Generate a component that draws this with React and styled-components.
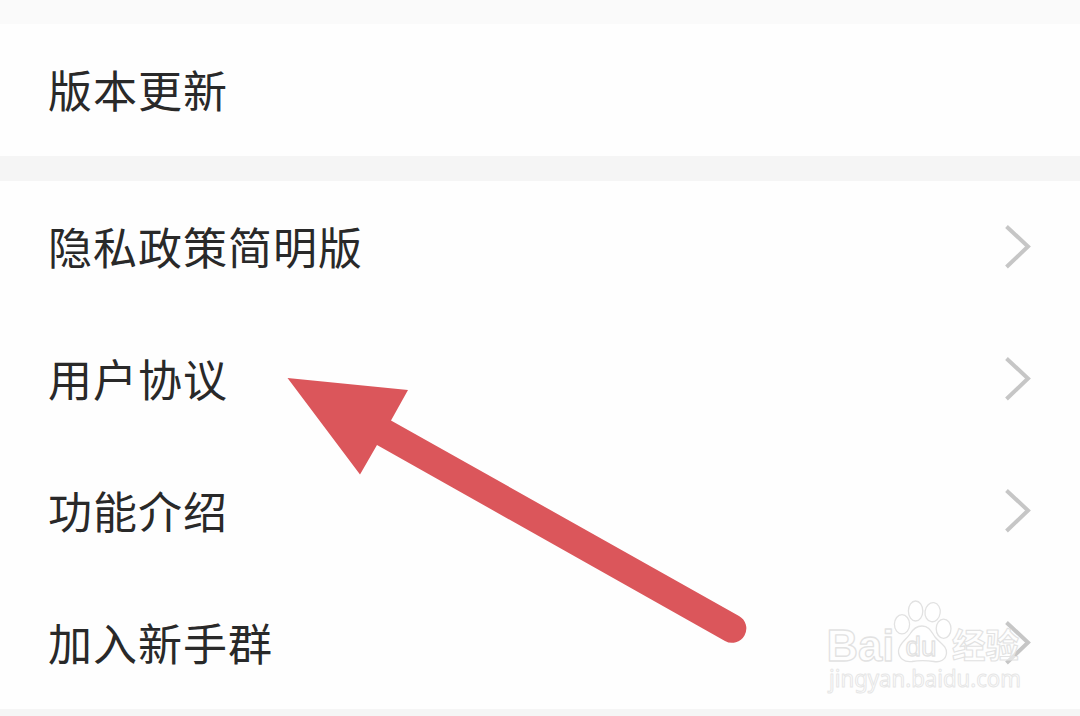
import styled, { createGlobalStyle } from 'styled-components';

const GlobalStyle = createGlobalStyle`
  * {
    box-sizing: border-box;
  }

  body {
    margin: 0;
    background: #f5f5f5;
    font-family: 'Noto Sans CJK SC', sans-serif;
  }
`;

const Page = styled.div`
  position: relative;
  width: 1080px;
  height: 716px;
  overflow: hidden;
  display: flex;
  flex-direction: column;
`;

const Gap = styled.div`
  flex: none;
  height: ${({ $height }) => $height}px;
  background: ${({ $color }) => $color};
`;

const Group = styled.ul`
  flex: none;
  margin: 0;
  padding: 0;
  list-style: none;
  background: #fefefe;
`;

const Row = styled.li`
  display: flex;
  align-items: center;
  justify-content: space-between;
  height: 132px;
  padding: 0 48px;
`;

const Label = styled.span`
  padding-bottom: 3px;
  font-size: 44px;
  line-height: 64px;
  letter-spacing: 1px;
  color: #292929;
`;

const Chevron = styled.svg`
  width: 28px;
  height: 44px;
  fill: none;
  stroke: #c6c6c6;
  stroke-width: 4;
`;

const Arrow = styled.svg`
  position: absolute;
  top: 370px;
  left: 280px;
  width: 480px;
  height: 284px;
  fill: #db565b;
`;

const Watermark = styled.svg`
  position: absolute;
  top: 590px;
  left: 816px;
  width: 220px;
  height: 120px;
  fill: rgba(255, 255, 255, 0.5);
  stroke: #e2e2e2;
  stroke-width: 1.3;
  stroke-linejoin: round;

  .brand {
    font: bold 45px 'Liberation Sans', sans-serif;
  }

  .du {
    font: 28px 'Liberation Sans', sans-serif;
  }

  .cn {
    font: bold 34px 'Noto Sans CJK SC', sans-serif;
    stroke-width: 1.1;
  }

  .url {
    font: 23px 'Noto Sans', sans-serif;
    stroke: #e6e6e6;
    stroke-width: 1;
  }
`;

const links = ['隐私政策简明版', '用户协议', '功能介绍', '加入新手群'];

const App = () => {
  return (
    <Page>
      <GlobalStyle />
      <Gap $height={24} $color="#fafafa" />
      <Group>
        <Row>
          <Label>版本更新</Label>
        </Row>
      </Group>
      <Gap $height={25} $color="#f5f5f5" />
      <Group>
        {links.map((text) => (
          <Row key={text}>
            <Label>{text}</Label>
            <Chevron viewBox="0 0 28 44">
              <path d="M2.5 1.5 L24 21.5 L2.5 42" />
            </Chevron>
          </Row>
        ))}
      </Group>
      <Gap $height={7} $color="#f5f5f5" />

      <Arrow viewBox="280 370 480 284">
        <path d="M287.5 378 L408 390 L391 420.5 L739 616 A14 14 0 0 1 725 641 L377 445 L360 474.5 Z" />
      </Arrow>

      <Watermark viewBox="816 590 220 120">
        <text className="brand" x="826.5" y="660.5" textLength="68" lengthAdjust="spacingAndGlyphs">
          Bai
        </text>
        <ellipse cx="902" cy="624.3" rx="7.6" ry="9.6" />
        <ellipse cx="915.6" cy="611" rx="7.2" ry="10" />
        <ellipse cx="932.6" cy="612.2" rx="7.6" ry="9.6" transform="rotate(8 932.6 612.2)" />
        <ellipse cx="943.6" cy="628.7" rx="7.4" ry="9.6" />
        <path d="M922 626 C929 626 931 631 935 637 C940 643 947 646 946.5 653 C946 660 940 662.5 934 661.5 C925 660 920 660 912 661.5 C904 662.5 898.5 658 898.5 651 C899 643 906 640 910 634 C913 629 916 626 922 626 Z" />
        <text className="du" x="905.5" y="656" textLength="31" lengthAdjust="spacingAndGlyphs">
          du
        </text>
        <text className="cn" x="952" y="658" textLength="67" lengthAdjust="spacingAndGlyphs">
          经验
        </text>
        <text className="url" x="829" y="686.5" textLength="192" lengthAdjust="spacingAndGlyphs">
          jingyan.baidu.com
        </text>
      </Watermark>
    </Page>
  );
};

export default App;
